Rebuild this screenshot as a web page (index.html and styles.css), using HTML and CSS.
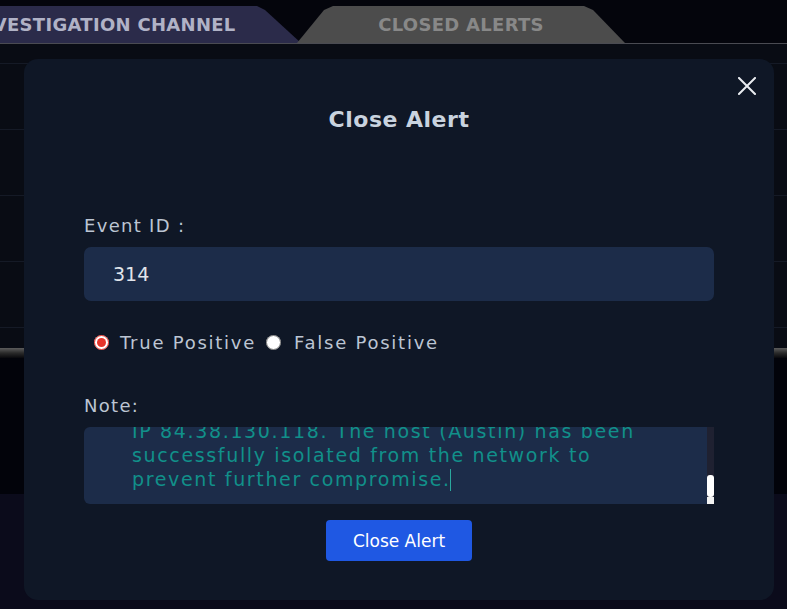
FILE: index.html
```html
<!DOCTYPE html>
<html lang="en">

<head>
    <meta charset="UTF-8">
    <meta name="viewport" content="width=device-width, initial-scale=1.0">
    <title>Close Alert</title>
    <link rel="stylesheet" href="styles.css">
</head>

<body>
    <nav class="tabs">
        <div class="tab tab-investigation">INVESTIGATION CHANNEL</div>
        <div class="tab tab-closed">CLOSED ALERTS</div>
    </nav>

    <!-- alert table behind the overlay -->
    <div class="table">
        <div class="table-head"></div>
        <div class="table-row"></div>
        <div class="table-row"></div>
        <div class="table-row"></div>
        <div class="table-row"></div>
    </div>
    <div class="table-bar"></div>
    <div class="table-lower"></div>
    <div class="page-bottom"></div>

    <div class="modal">
        <button class="modal-close" aria-label="Close">
            <svg width="18" height="18" viewBox="0 0 18 18">
                <path d="M1 1 L17 17 M17 1 L1 17" stroke="#e9ecf0" stroke-width="2" stroke-linecap="square" fill="none" />
            </svg>
        </button>

        <h2 class="modal-title">Close Alert</h2>

        <div class="modal-body">
            <label class="field-label">Event ID :</label>
            <div class="input-box">314</div>

            <div class="radio-row">
                <input type="radio" name="verdict" id="tp" checked>
                <label for="tp">True Positive</label>
                <input type="radio" name="verdict" id="fp">
                <label for="fp">False Positive</label>
            </div>

            <label class="field-label note-label">Note:</label>
            <div class="note-box">
                <div class="note-text">
                    <span>IP 84.38.130.118. The host (Austin) has been</span>
                    <span>successfully isolated from the network to</span>
                    <span>prevent further compromise.<i class="caret"></i></span>
                </div>
                <div class="note-scroll">
                    <div class="note-thumb"></div>
                    <div class="note-corner"></div>
                </div>
            </div>

            <div class="actions">
                <button class="btn-close-alert">Close Alert</button>
            </div>
        </div>
    </div>
</body>

</html>
```

FILE: styles.css
```css
body {
    margin: 0;
    width: 787px;
    height: 609px;
    overflow: hidden;
    background-color: #04050c;
    font-family: 'DejaVu Sans', 'Liberation Sans', sans-serif;
    position: relative;
}

/* tabs */
.tabs {
    height: 43px;
    display: flex;
    align-items: flex-end;
    border-bottom: 1px solid #4a4b52;
    overflow: hidden;
}

.tab {
    height: 37px;
    flex-shrink: 0;
    display: flex;
    align-items: center;
    justify-content: center;
    font-size: 18px;
    font-weight: bold;
    letter-spacing: 0.3px;
}

.tab-investigation {
    width: 396px;
    margin-left: -95px;
    background-color: #2b2b4a;
    color: #b0b2c6;
    clip-path: polygon(0 0, 352px 0, 360px 4px, 396px 100%, 0 100%);
}

.tab-closed {
    width: 328px;
    margin-left: -4px;
    background-color: #4c4c4c;
    color: #888;
    clip-path: polygon(0 100%, 27px 4px, 36px 0, 287px 0, 296px 4px, 328px 100%);
}

/* table behind the overlay */
.table {
    height: 304px;
    background-color: #090c14;
}

.table-head {
    height: 19px;
    border-bottom: 1px solid #151a26;
}

.table-row {
    height: 65px;
    border-bottom: 1px solid #151a26;
}

.table-bar {
    height: 10px;
    background: linear-gradient(#5c5c5c, #2a2a2a 50%, #08080c);
}

.table-lower {
    height: 136px;
    background-color: #02030a;
}

.page-bottom {
    height: 115px;
    background-color: #0b0b1b;
}

/* modal */
.modal {
    position: absolute;
    left: 24px;
    top: 59px;
    width: 750px;
    height: 541px;
    box-sizing: border-box;
    padding-top: 47px;
    background-color: #0f1726;
    border-radius: 14px;
}

.modal-close {
    position: absolute;
    top: 18px;
    right: 18px;
    padding: 0;
    border: none;
    background: none;
    width: 18px;
    height: 18px;
    display: flex;
}

.modal-title {
    margin: 0;
    text-align: center;
    font-size: 22px;
    line-height: 28px;
    letter-spacing: 0.5px;
    color: #c9d3df;
}

.modal-body {
    padding: 80px 60px 0;
    display: flex;
    flex-direction: column;
}

.field-label {
    font-size: 18px;
    line-height: 24px;
    letter-spacing: 1.3px;
    color: #bcc5d3;
}

.input-box {
    margin-top: 9px;
    height: 54px;
    padding-left: 29px;
    display: flex;
    align-items: center;
    background-color: #1c2c49;
    border-radius: 7px;
    font-size: 19px;
    color: #e1e5eb;
}

.radio-row {
    margin-top: 29px;
    display: flex;
    align-items: center;
    height: 24px;
    font-size: 18px;
    letter-spacing: 1.75px;
    color: #bcc5d3;
}

.radio-row input {
    width: 15px;
    height: 15px;
    margin: 0 11px 0 10px;
    accent-color: #e5352b;
}

.radio-row input#fp {
    margin: 0 13px 0 10px;
}

.note-label {
    margin-top: 40px;
}

.note-box {
    margin-top: 9px;
    height: 77px;
    display: flex;
    background-color: #1c2c49;
    border-radius: 6px 0 0 6px;
    overflow: hidden;
}

.note-text {
    flex-grow: 1;
    display: flex;
    flex-direction: column;
    justify-content: flex-end;
    padding: 0 0 13px 48px;
    font-size: 19px;
    line-height: 24px;
    letter-spacing: 1.65px;
    color: #11908a;
    white-space: nowrap;
}

.caret {
    display: inline-block;
    width: 1px;
    height: 22px;
    margin-left: -1px;
    vertical-align: -5px;
    background-color: #2aa89e;
}

.note-scroll {
    width: 7px;
    display: flex;
    flex-direction: column;
    justify-content: flex-end;
    background-color: #1f2131;
}

.note-thumb {
    height: 22px;
    background-color: #fff;
    border-radius: 3px;
}

.note-corner {
    height: 7px;
    background-color: #f2f2f2;
}

.actions {
    margin-top: 16px;
    display: flex;
    justify-content: center;
}

.btn-close-alert {
    width: 146px;
    height: 41px;
    border: none;
    border-radius: 4px;
    background-color: #1f58e3;
    color: #fff;
    font-family: 'DejaVu Sans', sans-serif;
    font-size: 17px;
}
```
